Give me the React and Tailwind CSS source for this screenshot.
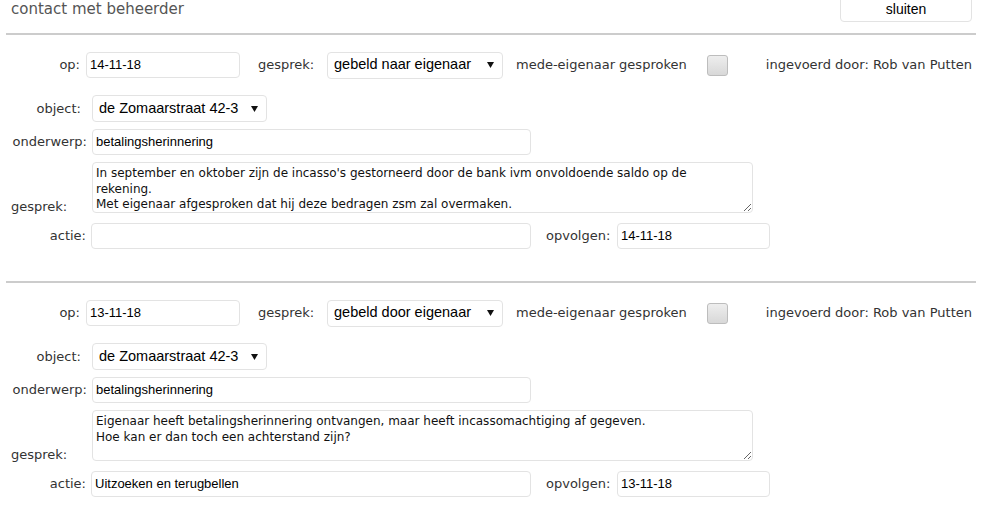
import React from "react";

const lbl = "text-[13px] text-[#333] font-['DejaVu_Sans',sans-serif] whitespace-nowrap";
const inp =
  "h-[26px] border border-[#e3e3e3] rounded-[4px] bg-white px-[3px] flex items-center text-[13px] text-black font-['Liberation_Sans',Arial,sans-serif] whitespace-nowrap";

function Arrow() {
  return (
    <svg width="7" height="6" viewBox="0 0 7 6" className="shrink-0">
      <polygon points="0,0 7,0 3.5,6" fill="#111" />
    </svg>
  );
}

function Select({ value, w, h = 27 }) {
  return (
    <div
      className={`${w} border border-[#e3e3e3] rounded-[4px] bg-white pl-[6px] pr-[8px] flex items-center justify-between text-[14.5px] text-black font-['Liberation_Sans',Arial,sans-serif] whitespace-nowrap`}
      style={{ height: h }}
    >
      <span>{value}</span>
      <Arrow />
    </div>
  );
}

function Block({ op, gesprek, text, actie, opvolgen }) {
  return (
    <div>
      <div className="mx-[6px] h-[2px] bg-[#cccccc]" />
      <div className="pt-[17px] pb-[32px] flex flex-col">
        {/* row 1 */}
        <div className="flex items-center h-[26px]">
          <div className={`${lbl} w-[80px] text-right`}>op:</div>
          <div className={`${inp} w-[154px] ml-[6px]`}>{op}</div>
          <div className={`${lbl} w-[69px] ml-[18px]`}>gesprek:</div>
          <Select value={gesprek} w="w-[176px]" />
          <div className={`${lbl} w-[191px] ml-[13px]`}>mede-eigenaar gesproken</div>
          <div className="w-[21px] h-[21px] rounded-[3px] border border-[#bdbdbd] bg-gradient-to-b from-[#eeeeee] to-[#d8d8d8]" />
          <div className={`${lbl} ml-auto pr-[10px]`}>ingevoerd door: Rob van Putten</div>
        </div>
        {/* row 2 */}
        <div className="flex items-center mt-[17px]">
          <div className={`${lbl} w-[81px] text-right`}>object:</div>
          <div className="ml-[11px]">
            <Select value="de Zomaarstraat 42-3" w="w-[175px]" />
          </div>
        </div>
        {/* row 3 */}
        <div className="flex items-center mt-[7px]">
          <div className={`${lbl} w-[87px] text-right`}>onderwerp:</div>
          <div className={`${inp} w-[439px] ml-[5px]`}>betalingsherinnering</div>
        </div>
        {/* row 4 */}
        <div className="flex items-end mt-[7px]">
          <div className={`${lbl} w-[92px] pl-[11px] leading-[15px] translate-y-[1px]`}>gesprek:</div>
          <textarea
            readOnly
            defaultValue={text}
            className="w-[661px] h-[51px] border border-[#e3e3e3] rounded-[4px] bg-white px-[3px] pt-[3px] text-[12px] leading-[15.5px] text-[#111] font-['DejaVu_Sans',sans-serif] outline-none overflow-hidden"
          />
        </div>
        {/* row 5 */}
        <div className="flex items-center mt-[10px]">
          <div className={`${lbl} w-[86px] text-right`}>actie:</div>
          <div className={`${inp} w-[440px] ml-[5px]`}>{actie}</div>
          <div className={`${lbl} ml-[15px] w-[71px]`}>opvolgen:</div>
          <div className={`${inp} w-[153px]`}>{opvolgen}</div>
        </div>
      </div>
    </div>
  );
}

export default function App() {
  return (
    <div className="w-[982px] h-[514px] overflow-hidden bg-white">
      <div className="h-[33px] flex items-start justify-between relative">
        <div className="pl-[11px] pt-[0px] text-[15px] leading-[18px] text-[#555] font-['DejaVu_Sans',sans-serif]">
          contact met beheerder
        </div>
        <div className="mr-[10px] mt-[-7px] w-[132px] h-[29px] border border-[#e3e3e3] rounded-[4px] bg-white flex items-center justify-center pt-[3px] text-[14px] text-black font-['Liberation_Sans',Arial,sans-serif]">
          sluiten
        </div>
      </div>
      <Block
        op="14-11-18"
        gesprek="gebeld naar eigenaar"
        text={"In september en oktober zijn de incasso's gestorneerd door de bank ivm onvoldoende saldo op de\nrekening.\nMet eigenaar afgesproken dat hij deze bedragen zsm zal overmaken."}
        actie=""
        opvolgen="14-11-18"
      />
      <Block
        op="13-11-18"
        gesprek="gebeld door eigenaar"
        text={"Eigenaar heeft betalingsherinnering ontvangen, maar heeft incassomachtiging af gegeven.\nHoe kan er dan toch een achterstand zijn?"}
        actie="Uitzoeken en terugbellen"
        opvolgen="13-11-18"
      />
    </div>
  );
}
